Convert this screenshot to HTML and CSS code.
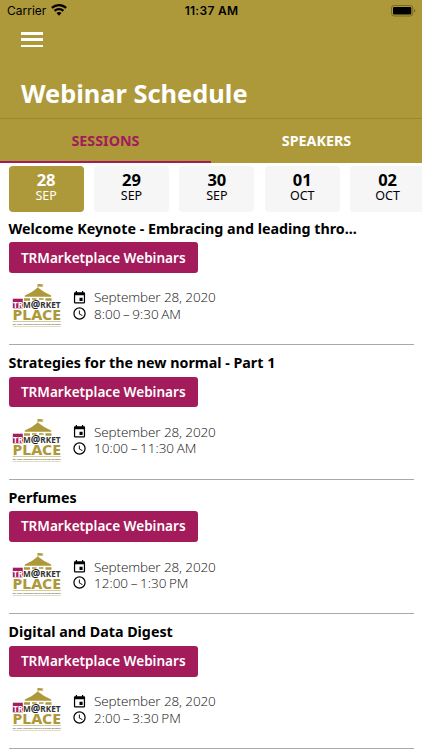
FILE: index.html
```html
<!DOCTYPE html>
<html lang="en">
<head>
<meta charset="utf-8">
<title>Webinar Schedule</title>
<link rel="stylesheet" href="styles.css">
</head>
<body>
<svg class="defs" width="0" height="0" aria-hidden="true">
  <symbol id="calendar" viewBox="2.500 1 19 21"><path d="M17 12h-5v5h5v-5zM16 1v2H8V1H6v2H5c-1.110 0-1.990.9-1.990 2L3 19a2 2 0 0 0 2 2h14c1.100 0 2-.9 2-2V5c0-1.100-.9-2-2-2h-1V1h-2zm3 18H5V8h14v11z"/></symbol>
  <symbol id="clock" viewBox="1.500 1.500 21 21"><path d="M12 2a10 10 0 1 0 0 20 10 10 0 0 0 0-20zm0 18a8 8 0 1 1 0-16 8 8 0 0 1 0 16zm.5-13H11v6l5.250 3.150.75-1.230-4.500-2.670z"/></symbol>
  <symbol id="logo" viewBox="0 0 50 44">
    <path fill="#ad9939" d="M25.500 0h.7l5.300.6-1.200 1 1.200 1.100-5.300-.2v1.200l6 4.200 7 3.600v1.300H12.800v-1.300l7-3.600 5.700-4.200zM12 14.300h6v2.400h-6zM20 14.300h4.500v1.400H20zM27 14.300h4.500v1.400H27zM33.500 14.300h6v2.400h-6z"/>
    <path fill="#a61c5c" d="M.8 14.700h10v9.600H.8z"/>
    <text class="logo-market" x=".9" y="24.200" textLength="47.600" lengthAdjust="spacingAndGlyphs"><tspan class="logo-tr">TR</tspan>M<tspan class="logo-at">@</tspan>RKET</text>
    <text class="logo-place" x=".5" y="36.300" textLength="48.500" lengthAdjust="spacingAndGlyphs">PLACE</text>
    <path fill="#c5b978" d="M.8 37.300h48v.6H.8zM.8 42.300h48v.5H.8z"/>
    <text class="logo-tag" x=".8" y="40.900" textLength="48" lengthAdjust="spacingAndGlyphs">MY VERY SUCCESS POPULAR OPEN MARKET</text>
  </symbol>
</svg>
<header class="header">
  <div class="status">
    <div class="carrier"><span>Carrier</span>
      <svg class="wifi" viewBox="0 0 16 12"><path d="M8 0c3 0 5.800 1.100 7.900 3.100l-1.500 1.700A9.400 9.400 0 0 0 8 2.300a9.400 9.400 0 0 0-6.400 2.500L.1 3.100A11.500 11.500 0 0 1 8 0zm0 4c2 0 3.800.8 5.200 2l-1.600 1.700A5.300 5.300 0 0 0 8 6.300c-1.400 0-2.600.5-3.600 1.400L2.800 6A7.700 7.700 0 0 1 8 4zm0 4c1 0 1.900.4 2.500 1L8 11.700 5.500 9A3.700 3.700 0 0 1 8 8z"/></svg>
    </div>
    <span class="clock-time">11:37 AM</span>
    <svg class="battery" viewBox="0 0 25 12"><rect x=".5" y=".5" width="21.300" height="10.500" rx="2.600" fill="none" stroke="#766928"/><rect x="2" y="2" width="18.300" height="7.500" rx="1.200"/><path fill="#766928" d="M23 4c1.900.6 1.900 2.900 0 3.500z"/></svg>
  </div>
  <button class="menu" aria-label="Menu"><span></span><span></span><span></span></button>
  <h1>Webinar Schedule</h1>
</header>
<nav class="tabs">
  <a class="tab active"><span>SESSIONS</span></a>
  <a class="tab"><span>SPEAKERS</span></a>
</nav>
<div class="dates">
  <div class="date selected"><b>28</b><span>SEP</span></div>
  <div class="date"><b>29</b><span>SEP</span></div>
  <div class="date"><b>30</b><span>SEP</span></div>
  <div class="date"><b>01</b><span>OCT</span></div>
  <div class="date"><b>02</b><span>OCT</span></div>
</div>
<main>
  <article class="session">
    <h2>Welcome Keynote - Embracing and leading thro...</h2>
    <div class="tag"><span>TRMarketplace Webinars</span></div>
    <div class="details">
      <svg class="logo"><use href="#logo"/></svg>
      <div class="when">
        <div class="row"><svg><use href="#calendar"/></svg><span class="day">September 28, 2020</span></div>
        <div class="row"><svg><use href="#clock"/></svg><span class="time">8:00 – 9:30 AM</span></div>
      </div>
    </div>
  </article>
  <article class="session">
    <h2>Strategies for the new normal - Part 1</h2>
    <div class="tag"><span>TRMarketplace Webinars</span></div>
    <div class="details">
      <svg class="logo"><use href="#logo"/></svg>
      <div class="when">
        <div class="row"><svg><use href="#calendar"/></svg><span class="day">September 28, 2020</span></div>
        <div class="row"><svg><use href="#clock"/></svg><span class="time">10:00 – 11:30 AM</span></div>
      </div>
    </div>
  </article>
  <article class="session">
    <h2>Perfumes</h2>
    <div class="tag"><span>TRMarketplace Webinars</span></div>
    <div class="details">
      <svg class="logo"><use href="#logo"/></svg>
      <div class="when">
        <div class="row"><svg><use href="#calendar"/></svg><span class="day">September 28, 2020</span></div>
        <div class="row"><svg><use href="#clock"/></svg><span class="time">12:00 – 1:30 PM</span></div>
      </div>
    </div>
  </article>
  <article class="session">
    <h2>Digital and Data Digest</h2>
    <div class="tag"><span>TRMarketplace Webinars</span></div>
    <div class="details">
      <svg class="logo"><use href="#logo"/></svg>
      <div class="when">
        <div class="row"><svg><use href="#calendar"/></svg><span class="day">September 28, 2020</span></div>
        <div class="row"><svg><use href="#clock"/></svg><span class="time">2:00 – 3:30 PM</span></div>
      </div>
    </div>
  </article>
</main>
</body>
</html>
```
FILE: styles.css
```css
* { box-sizing: border-box; }
html, body { margin: 0; height: 750px; overflow: hidden; }
body { background: #fff; color: #000; font-family: "Noto Sans", sans-serif; }
.defs { display: block; height: 0; }
.header { height: 119px; background: #ad9939; border-bottom: 1px solid #998731; }
.status {
  display: grid; grid-template-columns: 1fr auto 1fr; align-items: center;
  height: 22px; padding: 0 6px 0 7px; font: 12px/22px Inter, sans-serif;
}
.carrier { display: flex; align-items: center; gap: 5px; letter-spacing: 0; }
.wifi { width: 16px; height: 12px; margin-top: -2px; }
.clock-time { font-weight: 600; letter-spacing: .3px; }
.battery { width: 25px; height: 12px; justify-self: end; margin-top: -1px; }
.menu {
  display: flex; flex-direction: column; justify-content: space-between;
  width: 22px; height: 15px; margin: 10px 0 0 21px; padding: 0; border: 0; background: none;
}
.menu span { height: 2.500px; background: #fff; }
h1 { margin: 28px 0 0 21px; color: #fff; font-size: 25.400px; line-height: 36px; font-weight: 700; white-space: nowrap; }
.tabs { display: flex; height: 44px; background: #ad9939; }
.tab { flex: 1; text-align: center; color: #fff; font-size: 14.300px; line-height: 44px; font-weight: 700; }
.tab.active { color: #a31b5a; border-bottom: 2px solid #a31b5a; }
.dates { display: flex; gap: 10.200px; padding: 3px 0 0 8.500px; height: 49px; overflow: hidden; }
.date {
  display: flex; flex: 0 0 75.200px; flex-direction: column; align-items: center;
  height: 46px; padding-top: 5px; border-radius: 4px; background: #f6f6f6;
}
.date b { font-size: 16.500px; line-height: 18px; }
.date span { font-size: 12.500px; line-height: 14px; }
.date.selected { color: #fff; background: #ad9939; }
main { padding: 0 8.500px; }
.session { height: 134.700px; padding-top: 7px; border-bottom: 1px solid #aaa; }
main .session:first-child { height: 133px; padding-top: 6px; }
main .session:first-child h2 { height: 24px; }
h2 { margin: 0; height: 24.700px; font-size: 14.280px; line-height: 22px; font-weight: 700; white-space: nowrap; }
.tag {
  width: 189.500px; height: 30.500px; border-radius: 3px; background: #a31b5a; color: #fff;
  font-size: 13.550px; line-height: 31.400px; font-weight: 600; text-align: center; white-space: nowrap;
}
main .session:first-child .tag { line-height: 32px; }
.details { display: flex; gap: 11px; padding: 11.500px 0 0 3.500px; }
.logo { width: 50px; height: 44px; }
.when { padding-top: 5px; }
.row { display: flex; align-items: center; height: 16.400px; gap: 8px; font-family: "Open Sans", sans-serif; font-size: 13.500px; line-height: 16px; letter-spacing: -.1px; font-weight: 300; color: #111; white-space: nowrap; }
.row svg { width: 13px; height: 13px; fill: #000; }
.time { letter-spacing: 0; word-spacing: -.9px; }
.logo-market { font: 700 8.600px "Noto Sans", sans-serif; fill: #333; }
.logo-tr { fill: #fff; }
.logo-at { font-size: 11px; fill: #222; }
.logo-place { font: 800 14.200px "Noto Sans", sans-serif; fill: #ad9939; }
.logo-tag { font: 700 2.200px "Open Sans", sans-serif; fill: #555; }
```
